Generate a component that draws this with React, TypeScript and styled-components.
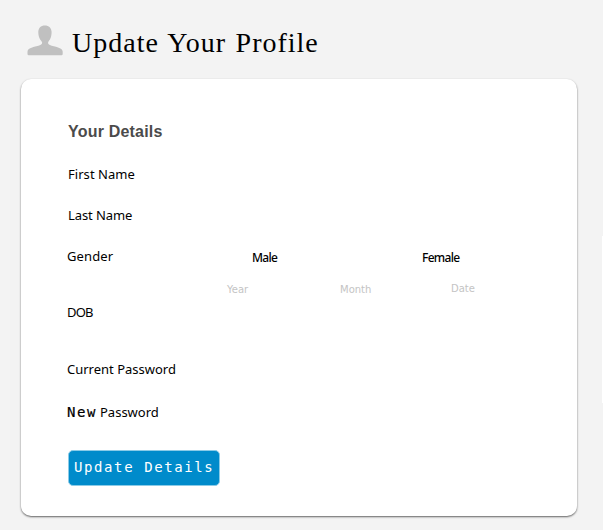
import React from "react";
import styled, { createGlobalStyle } from "styled-components";

const GlobalStyle = createGlobalStyle`
  * { box-sizing: border-box; }
  body { margin: 0; background: #f3f3f3; overflow: hidden; }
`;

const Page = styled.main`
  display: flex;
  align-items: flex-start;
  justify-content: space-between;
  width: 603px;
  height: 530px;
  padding-left: 21px;
  color: #000;
`;

const Content = styled.div`
  width: 556px;
`;

const Header = styled.header`
  display: flex;
  align-items: flex-start;
  gap: 9px;
  height: 79px;
  padding: 24px 0 0 6px;
`;

const UserIcon = styled.svg`
  display: block;
  width: 36px;
  height: 32px;
`;

const Title = styled.h1`
  margin: 3px 0 0;
  font: 400 28px/32px "Liberation Serif", serif;
  letter-spacing: 1px;
  word-spacing: 1.5px;
  white-space: nowrap;
`;

const Card = styled.section`
  height: 437px;
  padding: 42px 0 0 46px;
  background: #fff;
  border-radius: 10px;
  box-shadow: 0 1px 2px rgba(0, 0, 0, 0.6);
`;

const SectionTitle = styled.h2`
  height: 43px;
  margin: 0 0 0 1px;
  padding-top: 1px;
  font: 700 16px/20px "Liberation Sans", sans-serif;
  letter-spacing: 0.2px;
  color: #4b4b4b;
`;

const Row = styled.div<{ $height: number }>`
  display: flex;
  height: ${(p) => p.$height}px;
`;

const Label = styled.label<{ $spacing?: number; $indent?: number }>`
  width: 185px;
  padding-left: ${(p) => p.$indent ?? 0}px;
  font: 400 13px/20px "Noto Sans", sans-serif;
  letter-spacing: ${(p) => p.$spacing ?? 0}px;
  white-space: pre;
`;

const Emphasis = styled.span`
  display: inline-block;
  width: 33px;
  font: 400 14px/20px "DejaVu Sans Mono", monospace;
  letter-spacing: 1.6px;
  -webkit-text-stroke: 0.2px currentColor;
`;

const Choice = styled.span<{ $width: number }>`
  width: ${(p) => p.$width}px;
  padding-top: 2px;
  font: 500 12px/20px "Noto Sans", sans-serif;
  letter-spacing: -0.7px;
`;

const DateHints = styled.div`
  display: flex;
  height: 27px;
  padding: 8px 0 0 160px;
`;

const Hint = styled.span<{ $width: number; $lift?: number }>`
  width: ${(p) => p.$width}px;
  margin-top: ${(p) => -(p.$lift ?? 0)}px;
  font: 400 10px/14px "DejaVu Sans", sans-serif;
  color: #c4c4c4;
`;

const Submit = styled.button`
  display: block;
  width: 152px;
  height: 36px;
  margin: 0 0 0 1px;
  padding: 0 0 2px 5px;
  border: 1px solid #8bcbe7;
  border-radius: 5px;
  background: #008bcb;
  color: #fff;
  font: 400 14px/20px "DejaVu Sans Mono", monospace;
  letter-spacing: 1.6px;
  text-align: left;
  white-space: nowrap;
`;

const SidePanel = styled.aside`
  width: 1px;
  height: 167px;
  margin-top: 236px;
  background: #fff;
`;

export default function App() {
  return (
    <>
      <GlobalStyle />
      <Page>
        <Content>
          <Header>
            <UserIcon viewBox="0 0 36 32" aria-hidden="true">
              <path
                fill="#c0c0c0"
                d="M17.8 1.4c-4 0-6.5 2.7-6.5 6.7 0 5 1.8 7.5 3.5 9.7.8 1.2.3 2.3-1.4 3.1C8.5 22.8.5 23.2.5 27.7V30q0 1.2 1.2 1.2h32.8q1.2 0 1.2-1.2v-2.3c0-4.5-8-4.9-12.9-6.8-1.7-.8-2.2-1.9-1.4-3.1 1.7-2.2 3.2-4.7 3.2-9.7 0-4-2.7-6.7-6.8-6.7Z"
              />
            </UserIcon>
            <Title>Update Your Profile</Title>
          </Header>
          <Card>
            <SectionTitle>Your Details</SectionTitle>
            <Row $height={41}>
              <Label $indent={1} $spacing={0.05}>First Name</Label>
            </Row>
            <Row $height={41}>
              <Label $indent={1} $spacing={-0.1}>Last Name</Label>
            </Row>
            <Row $height={29}>
              <Label $spacing={0.1}>Gender</Label>
              <Choice $width={170}>Male</Choice>
              <Choice $width={60}>Female</Choice>
            </Row>
            <DateHints>
              <Hint $width={113}>Year</Hint>
              <Hint $width={111}>Month</Hint>
              <Hint $width={40} $lift={1}>Date</Hint>
            </DateHints>
            <Row $height={57}>
              <Label $spacing={-0.8}>DOB</Label>
            </Row>
            <Row $height={43}>
              <Label>Current Password</Label>
            </Row>
            <Row $height={48}>
              <Label>
                <Emphasis>New</Emphasis>Password
              </Label>
            </Row>
            <Submit type="button">Update Details</Submit>
          </Card>
        </Content>
        <SidePanel />
      </Page>
    </>
  );
}
